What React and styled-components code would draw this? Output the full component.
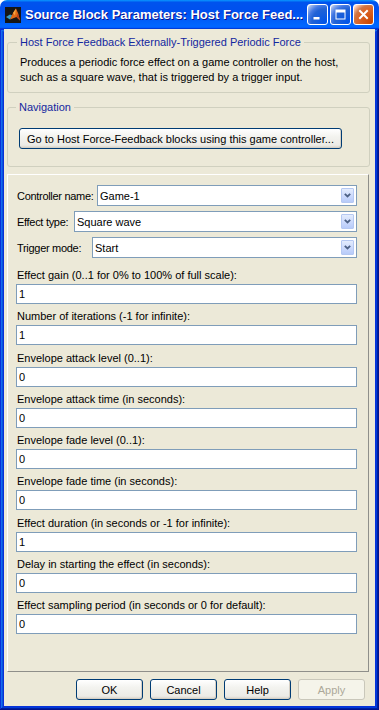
import React from 'react';
import styled, { createGlobalStyle } from 'styled-components';

const Global = createGlobalStyle`
  html, body { margin: 0; padding: 0; background: #ffffff; }
  body {
    width: 379px; height: 710px; overflow: hidden;
    font-family: "Liberation Sans", Arial, sans-serif; font-size: 11px;
  }
  * { box-sizing: border-box; }
`;

const Window = styled.div`
  width: 379px;
  height: 710px;
  display: flex;
  flex-direction: column;
`;

const TitleBar = styled.div`
  height: 29px;
  flex: none;
  display: flex;
  align-items: center;
  padding: 0 5px 0 5px;
  border-radius: 7px 7px 0 0;
  background: linear-gradient(180deg, #0997ff, #0053ee 8%, #0050ee 40%, #0066ff 88%, #0066ff 93%, #005bff 95%, #003dd7 96%, #003dd7);
`;

const TitleIcon = styled.svg`
  flex: none;
  margin-right: 4px;
  margin-top: 1px;
`;

const TitleText = styled.span`
  flex: 1;
  min-width: 0;
  color: #ffffff;
  font-family: "Liberation Sans", Arial, sans-serif;
  font-weight: bold;
  font-size: 13px;
  text-shadow: 1px 1px #0f1089;
  white-space: nowrap;
  overflow: hidden;
`;

const Controls = styled.div`
  flex: none;
  display: flex;
  gap: 2px;
  margin-left: 4px;
`;

const CtrlButton = styled.div`
  width: 21px;
  height: 21px;
  border: 1px solid #ffffff;
  border-radius: 3px;
  display: flex;
  align-items: center;
  justify-content: center;
  background: ${p => p.$close
    ? 'radial-gradient(circle at 90% 90%, #cc4600 0%, #dc6527 55%, #cd7546 70%, #ffccb2 90%, #ffffff 100%)'
    : 'radial-gradient(circle at 90% 90%, #0054e9 0%, #2263d5 55%, #4479e4 70%, #a3bbec 90%, #ffffff 100%)'};
`;

const Frame = styled.div`
  flex: 1;
  min-height: 0;
  display: flex;
  padding: 0 4px 4px 4px;
  background: #0831d9;
  box-shadow: inset -1px -1px #00138c, inset 1px 1px #0831d9, inset -2px -2px #001ea0,
    inset 2px 2px #166aee, inset -3px -3px #003bda, inset 3px 3px #0855dd;
`;

const Client = styled.div`
  flex: 1;
  min-width: 0;
  display: flex;
  flex-direction: column;
  background: #ece9d8;
  padding: 0 5px 6px 3px;
`;

const Group = styled.fieldset`
  margin: ${p => p.$mt}px 0 0 0;
  border: 1px solid #d0d0bf;
  border-radius: 3px;
  padding: ${p => p.$pad};
  min-width: 0;
`;

const Legend = styled.legend`
  color: #13279f;
  font-size: 11px;
  line-height: 14px;
  padding: 0 3px;
  margin-left: -3px;
`;

const Desc = styled.div`
  color: #000000;
  font-size: 11px;
  line-height: 15px;
`;

const XPButton = styled.button`
  height: 21px;
  width: ${p => p.$w}px;
  padding: 0;
  font-family: "Liberation Sans", Arial, sans-serif;
  font-size: 11px;
  color: ${p => (p.disabled ? '#aca899' : '#000000')};
  border: 1px solid ${p => (p.disabled ? '#c9c7ba' : '#003c74')};
  border-radius: 3px;
  background: ${p => (p.disabled
    ? '#f5f4ea'
    : 'linear-gradient(180deg, #ffffff 0%, #f3f3ef 40%, #ecebe6 85%, #d6d0c5 100%)')};
  box-shadow: ${p => (p.disabled ? 'none' : 'inset -1px -1px 0 #d6d0c5')};
  flex: none;
`;

const Panel = styled.div`
  margin: 7px 1px 0 0;
  flex: 1;
  min-height: 0;
  display: flex;
  flex-direction: column;
  border: 1px solid;
  border-color: #ffffff #8f8f8a #8f8f8a #ffffff;
  padding: 10px 11px 0 8px;
`;

const ComboRow = styled.div`
  display: flex;
  align-items: center;
  height: 21px;
  margin-top: ${p => p.$mt}px;
`;

const ComboLabel = styled.span`
  flex: none;
  width: ${p => p.$w}px;
  padding-left: 1px;
  color: #000000;
  white-space: nowrap;
  letter-spacing: -0.3px;
`;

const Combo = styled.div`
  flex: 1;
  height: 21px;
  display: flex;
  align-items: center;
  background: #ffffff;
  border: 1px solid #7f9db9;
  padding: 0 2px 0 2px;
  color: #000000;
`;

const ComboText = styled.span`
  flex: 1;
  white-space: nowrap;
`;

const ComboArrow = styled.div`
  flex: none;
  width: 13px;
  height: 15px;
  border: 1px solid #b5c8f2;
  border-radius: 1px;
  background: linear-gradient(180deg, #e4ecfd 0%, #c9d8fc 60%, #b7cbf9 100%);
  display: flex;
  align-items: center;
  justify-content: center;
`;

const ParamLabel = styled.div`
  margin-top: ${p => p.$mt}px;
  height: 14px;
  line-height: 14px;
  color: #000000;
  padding-left: 1px;
  white-space: nowrap;
`;

const Field = styled.input`
  display: block;
  margin-top: 2px;
  width: 100%;
  height: 20px;
  border: 1px solid #7f9db9;
  background: #ffffff;
  padding: 0 0 0 2px;
  font-family: "Liberation Sans", Arial, sans-serif;
  font-size: 11px;
  color: #000000;
  outline: none;
`;

const ButtonRow = styled.div`
  flex: none;
  display: flex;
  justify-content: flex-end;
  gap: 7px;
  margin-top: 7px;
  padding-right: 5px;
`;

const Chevron = () => (
  <svg width="7" height="5" viewBox="0 0 7 5">
    <polyline points="0.8,0.8 3.5,3.5 6.2,0.8" fill="none" stroke="#4d6185" strokeWidth="1.8" />
  </svg>
);

const combos = [
  ['Controller name:', 'Game-1', 81],
  ['Effect type:', 'Square wave', 58],
  ['Trigger mode:', 'Start', 76],
];

const params = [
  ['Effect gain (0..1 for 0% to 100% of full scale):', '1'],
  ['Number of iterations (-1 for infinite):', '1'],
  ['Envelope attack level (0..1):', '0'],
  ['Envelope attack time (in seconds):', '0'],
  ['Envelope fade level (0..1):', '0'],
  ['Envelope fade time (in seconds):', '0'],
  ['Effect duration (in seconds or -1 for infinite):', '1'],
  ['Delay in starting the effect (in seconds):', '0'],
  ['Effect sampling period (in seconds or 0 for default):', '0'],
];

export default function App() {
  return (
    <>
      <Global />
      <Window>
        <TitleBar>
          <TitleIcon width="16" height="16" viewBox="0 0 16 16">
            <rect width="16" height="16" fill="#161616" />
            <path d="M1 10 L5 7.5 L7.5 8.5 L5 12.5 Z" fill="#3a9cc4" />
            <path d="M5 12.5 L8 6 L11 1.5 L13 6 L15 13.5 L11.5 10 Z" fill="#e36a17" />
            <path d="M8 6 L11 1.5 L10 8.5 Z" fill="#f8a540" />
            <path d="M11.5 10 L15 13.5 L13 6 Z" fill="#b8401a" />
          </TitleIcon>
          <TitleText>Source Block Parameters: Host Force Feed...</TitleText>
          <Controls>
            <CtrlButton>
              <svg width="13" height="13" viewBox="0 0 13 13">
                <rect x="2.5" y="9" width="6" height="2.5" fill="#ffffff" />
              </svg>
            </CtrlButton>
            <CtrlButton>
              <svg width="13" height="13" viewBox="0 0 13 13">
                <rect x="2" y="2" width="9" height="9" fill="none" stroke="#ffffff" strokeWidth="1" />
                <rect x="2" y="2" width="9" height="2.5" fill="#ffffff" />
              </svg>
            </CtrlButton>
            <CtrlButton $close>
              <svg width="13" height="13" viewBox="0 0 13 13">
                <path d="M3 3 L10 10 M10 3 L3 10" stroke="#ffffff" strokeWidth="2" strokeLinecap="square" />
              </svg>
            </CtrlButton>
          </Controls>
        </TitleBar>
        <Frame>
          <Client>
            <Group $mt={6} $pad="6px 12px 7px 12px">
              <Legend>Host Force Feedback Externally-Triggered Periodic Force</Legend>
              <Desc>
                Produces a periodic force effect on a game controller on the host,
                <br />
                such as a square wave, that is triggered by a trigger input.
              </Desc>
            </Group>
            <Group $mt={7} $pad="14px 11px 17px 11px">
              <Legend>Navigation</Legend>
              <XPButton $w={323}>Go to Host Force-Feedback blocks using this game controller...</XPButton>
            </Group>
            <Panel>
              {combos.map(([label, value, w], i) => (
                <ComboRow key={label} $mt={i === 0 ? 0 : 5}>
                  <ComboLabel $w={w}>{label}</ComboLabel>
                  <Combo>
                    <ComboText>{value}</ComboText>
                    <ComboArrow>
                      <Chevron />
                    </ComboArrow>
                  </Combo>
                </ComboRow>
              ))}
              {params.map(([label, value], i) => (
                <React.Fragment key={label}>
                  <ParamLabel $mt={i === 0 ? 10 : 5.25}>{label}</ParamLabel>
                  <Field readOnly value={value} />
                </React.Fragment>
              ))}
            </Panel>
            <ButtonRow>
              <XPButton $w={67}>OK</XPButton>
              <XPButton $w={67}>Cancel</XPButton>
              <XPButton $w={67}>Help</XPButton>
              <XPButton $w={67} disabled>Apply</XPButton>
            </ButtonRow>
          </Client>
        </Frame>
      </Window>
    </>
  );
}
